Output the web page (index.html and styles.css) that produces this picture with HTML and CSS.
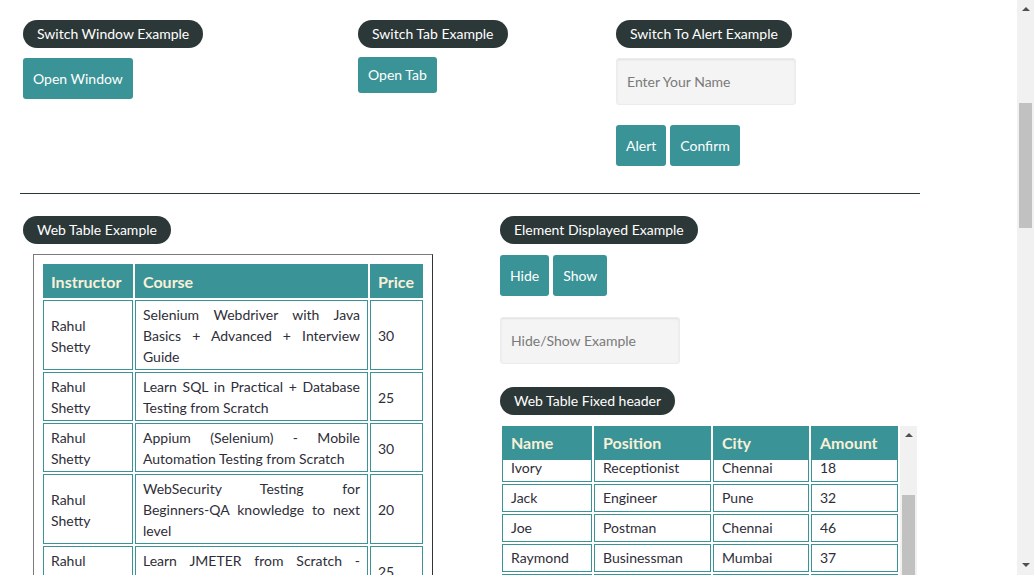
FILE: index.html
```html
<!DOCTYPE html>
<html lang="en">
<head>
<meta charset="utf-8">
<title>Practice Page</title>
<link rel="stylesheet" href="styles.css">
</head>
<body>
<div class="page">
  <div class="row row-top">
    <section class="block">
      <div class="legend">Switch Window Example</div>
      <div class="controls"><button class="btn">Open Window</button></div>
    </section>
    <section class="block">
      <div class="legend">Switch Tab Example</div>
      <div class="controls"><a class="btn btn-link">Open Tab</a></div>
    </section>
    <section class="block">
      <div class="legend">Switch To Alert Example</div>
      <div class="controls"><input class="field" type="text" placeholder="Enter Your Name"></div>
      <div class="controls controls-gap"><button class="btn">Alert</button><button class="btn">Confirm</button></div>
    </section>
  </div>
  <hr class="rule">
  <div class="row row-bottom">
    <section class="block">
      <div class="legend">Web Table Example</div>
      <div class="table-box">
        <table class="product">
          <thead>
            <tr><th class="c-ins">Instructor</th><th class="c-course">Course</th><th class="c-price">Price</th></tr>
          </thead>
          <tbody>
            <tr><td>Rahul Shetty</td><td class="just">Selenium Webdriver with Java Basics + Advanced + Interview Guide</td><td>30</td></tr>
            <tr><td>Rahul Shetty</td><td class="just">Learn SQL in Practical + Database Testing from Scratch</td><td>25</td></tr>
            <tr><td>Rahul Shetty</td><td class="just">Appium (Selenium) - Mobile Automation Testing from Scratch</td><td>30</td></tr>
            <tr><td>Rahul Shetty</td><td class="just">WebSecurity Testing for <span class="nowrap">Beginners-QA</span> knowledge to next level</td><td>20</td></tr>
            <tr><td>Rahul Shetty</td><td class="just">Learn JMETER from Scratch - (Performance + Load) Testing Tool</td><td>25</td></tr>
            <tr><td>Rahul Shetty</td><td class="just">WebServices / REST API Testing with SoapUI</td><td>35</td></tr>
            <tr><td>Rahul Shetty</td><td class="just">QA Expert Course :Software Testing + Bugzilla + SQL + Agile</td><td>25</td></tr>
            <tr><td>Rahul Shetty</td><td class="just">Master Selenium Automation in simple Python Language</td><td>25</td></tr>
            <tr><td>Rahul Shetty</td><td class="just">Advanced Selenium Framework Pageobject, TestNG, Maven, Cucumber</td><td>20</td></tr>
            <tr><td>Rahul Shetty</td><td class="just">Write effective QA Resume that will turn to interview call</td><td>0</td></tr>
          </tbody>
        </table>
      </div>
    </section>
    <section class="block">
      <div class="legend">Element Displayed Example</div>
      <div class="controls controls-b"><button class="btn">Hide</button><button class="btn">Show</button></div>
      <div class="controls controls-gap2"><input class="field" type="text" placeholder="Hide/Show Example"></div>
      <div class="legend legend-gap">Web Table Fixed header</div>
      <div class="fix-wrap">
        <div class="fix-head" id="fixHead">
          <table class="people">
            <thead>
              <tr><th class="c-name">Name</th><th class="c-pos">Position</th><th class="c-city">City</th><th class="c-amt">Amount</th></tr>
            </thead>
            <tbody>
              <tr><td>Alex</td><td>Engineer</td><td>Chennai</td><td>28</td></tr>
              <tr><td>Ben</td><td>Mechanic</td><td>Bengaluru</td><td>23</td></tr>
              <tr><td>Dwayne</td><td>Manager</td><td>Kolkata</td><td>48</td></tr>
              <tr><td>Ivory</td><td>Receptionist</td><td>Chennai</td><td>18</td></tr>
              <tr><td>Jack</td><td>Engineer</td><td>Pune</td><td>32</td></tr>
              <tr><td>Joe</td><td>Postman</td><td>Chennai</td><td>46</td></tr>
              <tr><td>Raymond</td><td>Businessman</td><td>Mumbai</td><td>37</td></tr>
              <tr><td>Ronaldo</td><td>Sportsman</td><td>Chennai</td><td>31</td></tr>
              <tr><td>Dybala</td><td>Footballer</td><td>Bengaluru</td><td>26</td></tr>
            </tbody>
          </table>
        </div>
        <div class="scrollbar inner-bar" aria-hidden="true">
          <span class="sb-up"></span>
          <span class="sb-thumb inner-thumb"></span>
          <span class="sb-down"></span>
        </div>
      </div>
    </section>
  </div>
</div>
<div class="scrollbar page-bar" aria-hidden="true">
  <span class="sb-up"></span>
  <span class="sb-thumb page-thumb"></span>
  <span class="sb-down"></span>
</div>
<script src="script.js"></script>
</body>
</html>
```

FILE: styles.css
```css
* { box-sizing: border-box; }
html, body { margin: 0; padding: 0; background: #fff; }
body {
  font-family: Lato, "Open Sans", sans-serif;
  font-size: 14px;
  color: #2e2e38;
}
.page {
  width: 900px;
  margin-left: 20px;
  padding-top: 20px;
  padding-bottom: 40px;
}
.row { display: grid; }
.row-top { grid-template-columns: 335px 258px 1fr; padding-left: 3px; }
.row-bottom { grid-template-columns: 477px 1fr; padding-left: 3px; }
.block { display: flex; flex-direction: column; align-items: flex-start; }
.legend {
  display: inline-block;
  background: #2c3737;
  color: #fff;
  font-size: 14px;
  line-height: 28px;
  height: 28px;
  padding: 0 14px;
  border-radius: 14px;
  white-space: nowrap;
}
.legend-gap { margin-top: 23px; }
.controls { margin-top: 10px; display: flex; gap: 4px; }
.controls-b { margin-top: 11px; }
.controls-gap { margin-top: 20px; }
.controls-gap2 { margin-top: 21px; }
.btn {
  font-family: inherit;
  font-size: 14px;
  color: #fff;
  background: #3a9396;
  border: 0;
  border-radius: 3px;
  padding: 0 10px;
  height: 41px;
  line-height: 41px;
  cursor: pointer;
}
.btn-link { display: inline-block; height: 36px; line-height: 36px; margin-top: -1px; }
.field {
  width: 180px;
  height: 47px;
  font-family: inherit;
  font-size: 14px;
  padding: 0 10px;
  background: #f4f4f4;
  border: 1px solid #ececec;
  border-radius: 3px;
  box-shadow: inset 0 1px 2px rgba(0,0,0,0.08);
  color: #333;
}
.field::placeholder { color: #7a7a7a; }
.rule {
  margin: 27px 0 22px 0;
  border: 0;
  border-top: 1px solid #2c3737;
  height: 0;
}
.table-box {
  margin-top: 10px;
  margin-left: 10px;
  width: 400px;
  border: 1px solid #7a7a7a;
  border-right-color: #333;
  padding: 7px;
}
.product, .people {
  border-collapse: separate;
  border-spacing: 2px;
  table-layout: fixed;
}
.product { width: 384px; }
.product th, .people th {
  background: #3a9396;
  color: #f8f0d8;
  font-weight: 700;
  font-size: 16px;
  text-align: left;
  border: 1px solid #3a9396;
}
.product th { padding: 9px 7px 8px; line-height: 15px; }
.product td {
  border: 1px solid #3a9396;
  padding: 3px 7px 2px;
  line-height: 21px;
  vertical-align: middle;
}
.nowrap { white-space: nowrap; }
.c-ins { width: 90px; }
.c-course { width: 233px; }
.c-price { width: 53px; }
.just { text-align: justify; }
.fix-wrap {
  position: relative;
  margin-top: 11px;
  width: 417px;
}
.fix-head {
  width: 417px;
  height: 200px;
  overflow-y: scroll;
  scrollbar-width: none;
}
.people { width: 400px; }
.people th {
  position: sticky;
  top: 0;
  padding: 8px 8px;
  line-height: 16px;
}
.people td {
  border: 1px solid #3a9396;
  padding: 4px 8px;
  line-height: 18px;
  background: #fff;
}
.c-name { width: 90px; }
.c-pos { width: 117px; }
.c-city { width: 96px; }
.c-amt { width: 87px; }

/* drawn scrollbars */
.scrollbar {
  position: absolute;
  top: 0;
  right: 0;
  width: 17px;
  background: #f1f1f1;
}
.inner-bar { height: 200px; }
.page-bar { position: fixed; height: 100vh; }
.sb-up, .sb-down {
  position: absolute;
  left: 5px;
  width: 0;
  height: 0;
  border-left: 4px solid transparent;
  border-right: 4px solid transparent;
}
.sb-up { top: 7px; border-bottom: 4px solid #505050; }
.sb-down { bottom: 8px; border-top: 4px solid #505050; }
.sb-thumb {
  position: absolute;
  left: 2px;
  width: 13px;
  background: #c1c1c1;
}
.page-thumb { top: 103px; height: 125px; }
.inner-thumb { top: 69px; height: 108px; }
```

FILE: script.js
```js
document.getElementById('fixHead').scrollTop = 100;
```
